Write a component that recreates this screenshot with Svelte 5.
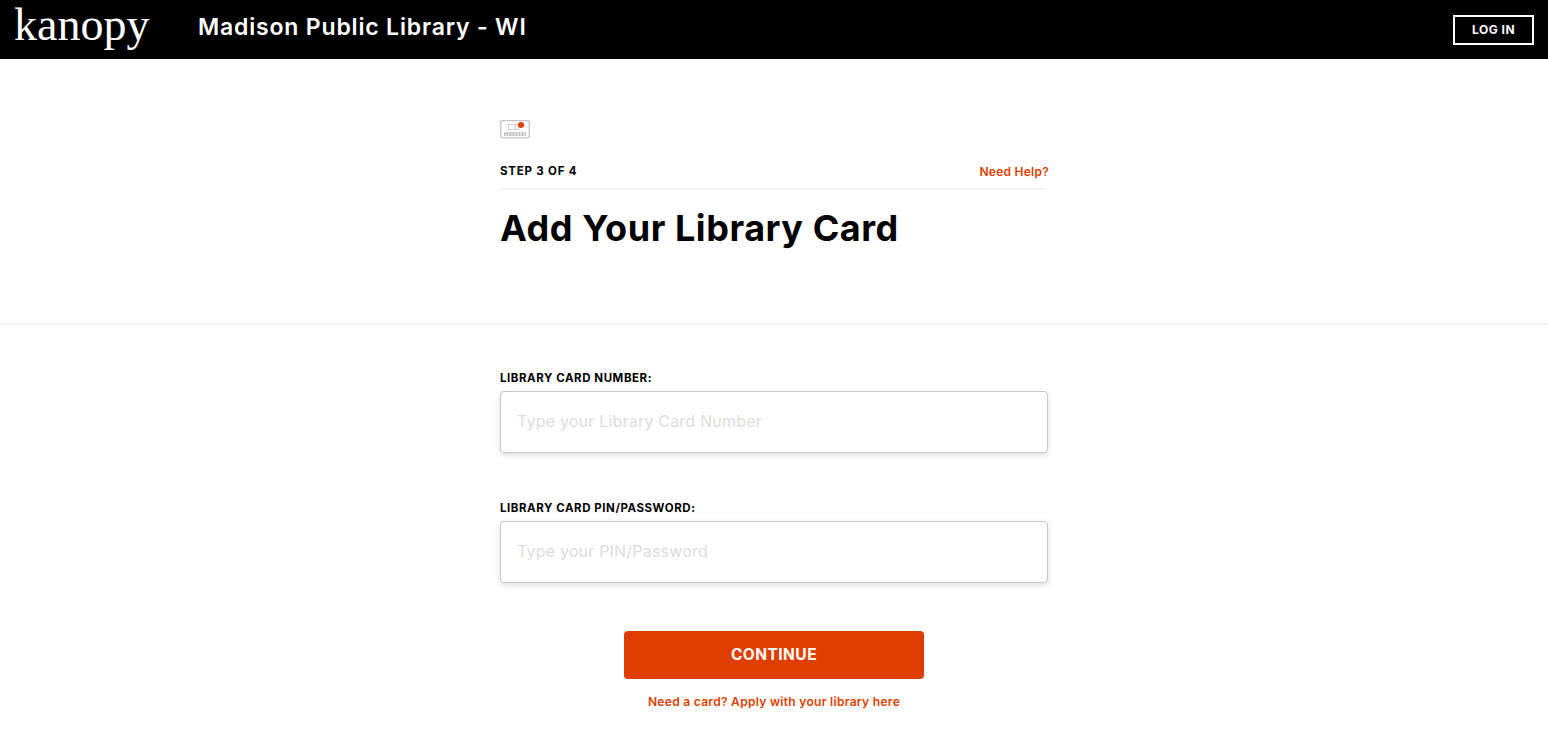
<script lang="ts">
	let cardNumber = $state('');
	let cardPin = $state('');
</script>

<header class="topbar">
	<span class="logo">kanopy</span>
	<span class="library">Madison Public Library - WI</span>
	<button class="login">LOG IN</button>
</header>

<section class="intro">
	<div class="column">
		<svg class="card-icon" width="30" height="20" viewBox="0 0 30 20" aria-hidden="true">
			<rect x="0.7" y="1.7" width="28.6" height="17.1" rx="2" fill="#fff" stroke="#c4c4c4" stroke-width="1.3" />
			<rect x="8.5" y="5.5" width="7" height="5" fill="#fff" stroke="#c4c4c4" stroke-width="0.8" />
			<rect x="15.5" y="5.5" width="3" height="5" fill="#fff" stroke="#c4c4c4" stroke-width="0.8" />
			<circle cx="21" cy="6" r="3" fill="#e03e00" />
			<line x1="4" y1="15" x2="26" y2="15" stroke="#bdbdbd" stroke-width="4" stroke-dasharray="1 0.5" />
		</svg>
		<div class="step-row">
			<span class="step">STEP 3 OF 4</span>
			<a class="help" href="#help">Need Help?</a>
		</div>
		<h1>Add Your Library Card</h1>
	</div>
</section>

<form class="column form" onsubmit={(e) => e.preventDefault()}>
	<label for="card-number">LIBRARY CARD NUMBER:</label>
	<input id="card-number" type="text" placeholder="Type your Library Card Number" bind:value={cardNumber} />

	<label class="second" for="card-pin">LIBRARY CARD PIN/PASSWORD:</label>
	<input id="card-pin" type="text" placeholder="Type your PIN/Password" bind:value={cardPin} />

	<button class="continue" type="submit">CONTINUE</button>
	<a class="apply" href="#apply">Need a card? Apply with your library here</a>
</form>

<style>
	:global(body) {
		background: #fff;
		color: #000;
		font-family: 'Inter', 'Liberation Sans', sans-serif;
	}

	.topbar {
		height: 59px;
		background: #000;
		color: #fff;
		display: flex;
		align-items: center;
		padding: 0 14px;
		box-sizing: border-box;
	}

	.logo {
		font-family: 'Liberation Serif', serif;
		font-size: 46px;
		line-height: 59px;
		width: 184px;
		margin-top: -10px;
	}

	.library {
		font-size: 23px;
		font-weight: 600;
		letter-spacing: 0.82px;
		margin-top: -5px;
	}

	.login {
		margin-left: auto;
		width: 81px;
		height: 30px;
		background: transparent;
		border: 2px solid #fff;
		color: #fff;
		font-family: inherit;
		font-size: 12px;
		font-weight: 700;
		letter-spacing: 0.5px;
		padding: 0;
	}

	.intro {
		height: 264px;
		border-bottom: 2px solid #f0f0f0;
	}

	.column {
		width: 548px;
		margin: 0 auto;
	}

	.card-icon {
		display: block;
		padding-top: 60px;
	}

	.step-row {
		display: flex;
		justify-content: space-between;
		align-items: center;
		margin-top: 21px;
		height: 22px;
		padding-bottom: 6px;
		border-bottom: 2px solid #f3f3f3;
		width: 546px;
	}

	.step {
		font-size: 11.5px;
		font-weight: 700;
		letter-spacing: 0.8px;
	}

	.help {
		font-size: 12px;
		font-weight: 600;
		letter-spacing: 0.25px;
		color: #e03e00;
		text-decoration: none;
		margin-right: -3px;
	}

	h1 {
		margin: 16px 0 0;
		font-size: 36px;
		line-height: 44px;
		font-weight: 700;
		letter-spacing: 0.55px;
	}

	.form {
		display: flex;
		flex-direction: column;
		padding-top: 43px;
	}

	label {
		font-size: 11.5px;
		font-weight: 700;
		letter-spacing: 0.55px;
		line-height: 20px;
		height: 23px;
	}

	.second {
		margin-top: 45px;
	}

	input {
		height: 62px;
		box-sizing: border-box;
		border: 1px solid #c8c8c8;
		border-radius: 4px;
		box-shadow: 0 2px 6px rgba(0, 0, 0, 0.14);
		padding: 0 16px 2px;
		font-family: inherit;
		font-size: 16px;
		letter-spacing: 0.2px;
		outline: none;
	}

	input::placeholder {
		color: #dcdcdc;
	}

	.continue {
		align-self: center;
		margin-top: 48px;
		width: 300px;
		height: 48px;
		padding: 0 0 2px;
		background: #e03e00;
		border: none;
		border-radius: 4px;
		color: #fff;
		font-family: inherit;
		font-size: 15.5px;
		font-weight: 700;
		letter-spacing: 0.45px;
	}

	.apply {
		align-self: center;
		margin-top: 15px;
		font-size: 12px;
		font-weight: 600;
		letter-spacing: 0.3px;
		color: #e03e00;
		text-decoration: none;
	}
</style>
